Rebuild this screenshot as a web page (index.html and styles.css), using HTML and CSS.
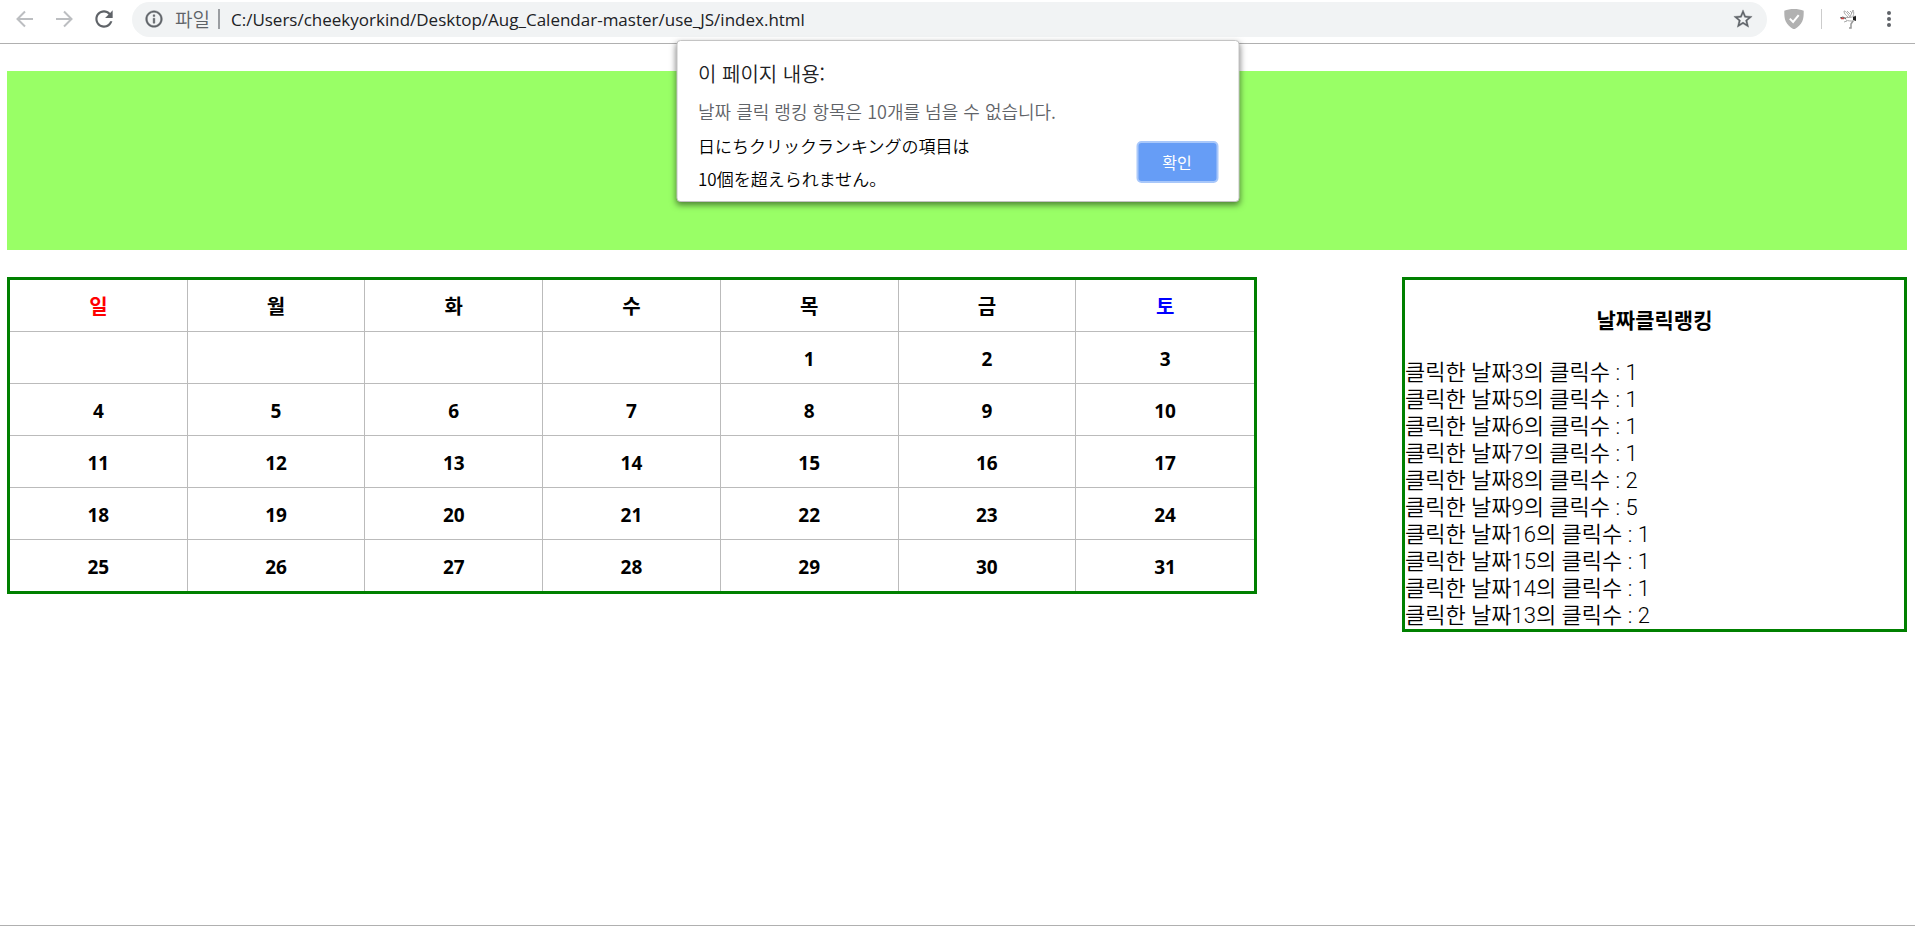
FILE: index.html
```html
<!DOCTYPE html>
<html lang="ko">
<head>
<meta charset="utf-8">
<title>Calendar</title>
<link rel="stylesheet" href="styles.css">
</head>
<body>
<header class="toolbar">
  <button class="tool" type="button" aria-label="뒤로"><svg width="24" height="24" viewBox="0 0 24 24" fill="none" stroke="#bcbec1" stroke-width="2"><path d="M20 12H5M12 4.500 4.500 12l7.500 7.500"/></svg></button>
  <button class="tool" type="button" aria-label="앞으로"><svg width="24" height="24" viewBox="0 0 24 24" fill="none" stroke="#bcbec1" stroke-width="2"><path d="M4 12h15M12 4.500 19.500 12 12 19.500"/></svg></button>
  <button class="tool" type="button" aria-label="새로고침"><svg width="26" height="26" viewBox="0 0 24 24" fill="#5f6368"><path d="M17.650 6.350C16.200 4.900 14.210 4 12 4c-4.420 0-7.990 3.580-7.990 8s3.570 8 7.990 8c3.730 0 6.840-2.550 7.730-6h-2.080c-.82 2.330-3.040 4-5.650 4-3.310 0-6-2.690-6-6s2.690-6 6-6c1.660 0 3.140.69 4.220 1.780L13 11h7V4l-2.350 2.350z"/></svg></button>
  <div class="omnibox">
    <svg width="20" height="20" viewBox="0 0 24 24" fill="#5f6368" stroke="#5f6368" stroke-width=".5"><path d="M11 17h2v-6h-2v6zm1-15C6.480 2 2 6.480 2 12s4.480 10 10 10 10-4.480 10-10S17.520 2 12 2zm0 18c-4.410 0-8-3.590-8-8s3.590-8 8-8 8 3.590 8 8-3.590 8-8 8zM11 9h2V7h-2v2z"/></svg>
    <label class="scheme" for="url">파일</label>
    <input class="url" id="url" type="text" value="C:/Users/cheekyorkind/Desktop/Aug_Calendar-master/use_JS/index.html">
    <button class="tool" type="button" aria-label="북마크"><svg width="22" height="22" viewBox="0 0 24 24" fill="#5f6368" stroke="#5f6368" stroke-width=".4"><path d="M22 9.240l-7.190-.62L12 2 9.190 8.630 2 9.240l5.460 4.730L5.820 21 12 17.270 18.180 21l-1.630-7.030L22 9.240zM12 15.400l-3.760 2.270 1-4.280-3.320-2.880 4.380-.38L12 6.100l1.710 4.040 4.380.38-3.320 2.880 1 4.280L12 15.400z"/></svg></button>
  </div>
  <div class="extensions">
    <button class="tool" type="button" aria-label="보호"><svg width="20" height="20" viewBox="0 0 20 20"><path fill="#b1b1b1" d="M10 0c3.500 0 7 .6 9.700 1.700 0 4 .1 7.300-1.500 10.800C16.500 16 13.500 18.500 10 20.500 6.500 18.500 3.500 16 1.800 12.500.2 9 .3 5.700.3 1.700 3 .6 6.500 0 10 0z"/><path fill="none" stroke="#fff" stroke-width="2" d="m5.800 9.600 3.300 3.300 5.600-6.800"/></svg></button>
    <span class="divider"></span>
    <button class="tool" type="button" aria-label="프로필"><svg width="20" height="20" viewBox="0 0 20 20" fill="none"><path stroke="#aaa" d="M5 2c2 0 4 3 6 6l3-7c1 2 1 4 0 6M5 2c0 3 2 4 4 6M8 2l3 3M11 2l2 2M5 9c3-1 5 0 8-1l4-1M7 11c2 1 4 1 8 1M5 13l3-1"/><path stroke="#999" stroke-width="1.500" d="M14 12l-2 3v4h-2"/><path fill="#222" d="m14 8 3-1v5l-3-1z"/><path stroke="#555" d="m1 9 3-1 3 2"/><path stroke="#c44" stroke-width="1.500" d="M2 9.500h3"/></svg></button>
    <button class="tool" type="button" aria-label="메뉴"><svg width="20" height="20" viewBox="0 0 20 20" fill="#5f6368"><circle cx="10" cy="4" r="2"/><circle cx="10" cy="10" r="2"/><circle cx="10" cy="16" r="2"/></svg></button>
  </div>
</header>

<main class="page">
  <div class="banner"></div>
  <div class="columns">
    <table class="calendar">
      <thead>
        <tr><th class="sunday">일</th><th>월</th><th>화</th><th>수</th><th>목</th><th>금</th><th class="saturday">토</th></tr>
      </thead>
      <tbody>
        <tr><td></td><td></td><td></td><td></td><td>1</td><td>2</td><td>3</td></tr>
        <tr><td>4</td><td>5</td><td>6</td><td>7</td><td>8</td><td>9</td><td>10</td></tr>
        <tr><td>11</td><td>12</td><td>13</td><td>14</td><td>15</td><td>16</td><td>17</td></tr>
        <tr><td>18</td><td>19</td><td>20</td><td>21</td><td>22</td><td>23</td><td>24</td></tr>
        <tr><td>25</td><td>26</td><td>27</td><td>28</td><td>29</td><td>30</td><td>31</td></tr>
      </tbody>
    </table>
    <section class="ranking">
      <h2 class="ranking-title">날짜클릭랭킹</h2>
      <ul class="ranking-list">
        <li>클릭한 날짜3의 클릭수 : 1</li>
        <li>클릭한 날짜5의 클릭수 : 1</li>
        <li>클릭한 날짜6의 클릭수 : 1</li>
        <li>클릭한 날짜7의 클릭수 : 1</li>
        <li>클릭한 날짜8의 클릭수 : 2</li>
        <li>클릭한 날짜9의 클릭수 : 5</li>
        <li>클릭한 날짜16의 클릭수 : 1</li>
        <li>클릭한 날짜15의 클릭수 : 1</li>
        <li>클릭한 날짜14의 클릭수 : 1</li>
        <li>클릭한 날짜13의 클릭수 : 2</li>
      </ul>
    </section>
  </div>
</main>

<dialog class="alert" open>
  <h1 class="alert-title">이 페이지 내용:</h1>
  <p class="alert-message">날짜 클릭 랭킹 항목은 10개를 넘을 수 없습니다.</p>
  <div class="alert-footer">
    <p class="translation" lang="ja">日にちクリックランキングの項目は<br>10個を超えられません。</p>
    <button class="confirm" type="button">확인</button>
  </div>
</dialog>
</body>
</html>
```
FILE: styles.css
```css
* {
  box-sizing: border-box;
}

body {
  margin: 0;
  min-height: 100vh;
  display: flex;
  flex-direction: column;
  background: #fff;
  color: #000;
  font-family: "Noto Sans CJK KR", sans-serif;
  font-weight: 350;
}

/* Browser toolbar */
.toolbar {
  display: flex;
  align-items: center;
  height: 44px;
  padding: 0 14px 5px 13px;
  border-bottom: 1px solid #b0b0b0;
}

.tool {
  display: flex;
  padding: 0;
  border: 0;
  background: none;
}

.toolbar > .tool {
  margin-right: 15px;
}

.omnibox {
  flex: 1;
  display: flex;
  align-items: center;
  height: 35px;
  padding: 0 13px 0 12px;
  border-radius: 18px;
  background: #f1f3f4;
}

.scheme {
  margin-left: 11px;
  padding-right: 8px;
  border-right: 2px solid #9a9da1;
  color: #5f6368;
  font-size: 19px;
  line-height: 20px;
}

.url {
  flex: 1;
  min-width: 0;
  height: 30px;
  margin-left: 11px;
  padding: 0;
  border: 0;
  background: none;
  color: #202124;
  font-family: "Open Sans", sans-serif;
  font-size: 17px;
}

.extensions {
  display: flex;
  align-items: center;
  gap: 17px;
  margin-left: 17px;
}

.extensions .tool:last-child {
  margin-left: 3px;
  margin-right: 2px;
}

.divider {
  width: 1px;
  height: 20px;
  background: #ccc;
}

/* Calendar page */
.page {
  flex: 1;
  padding: 27px 8px 0 7px;
  margin-bottom: 1px;
  border-bottom: 1px solid #b0b0b0;
}

.banner {
  height: 179px;
  margin-bottom: 27px;
  background: #9f6;
}

.columns {
  display: grid;
  grid-template-columns: 250fr 101fr;
  column-gap: 145px;
  align-items: start;
}

.calendar {
  width: 100%;
  border: 3px solid green;
  border-spacing: 0;
  table-layout: fixed;
  font-size: 19px;
  font-weight: bold;
}

.calendar th,
.calendar td {
  height: 52px;
  padding: 2px 0 0;
  border-right: 1px solid #bbb;
  border-bottom: 1px solid #bbb;
  line-height: 26px;
  text-align: center;
}

.calendar th {
  padding: 0;
  font-size: 20px;
}

.calendar td {
  font-family: "Open Sans", sans-serif;
}

.calendar th:last-child,
.calendar td:last-child {
  border-right: 0;
}

.calendar tr:last-child td {
  height: 51px;
  border-bottom: 0;
}

.calendar thead tr th {
  height: 52px;
  border-bottom: 1px solid #bbb;
}

.calendar .sunday {
  color: red;
}

.calendar .saturday {
  color: blue;
}

.ranking {
  border: 3px solid green;
  line-height: 27px;
}

.ranking-title {
  margin: 26px 0;
  font-size: 21px;
  line-height: 27px;
  text-align: center;
}

.ranking-list {
  margin: 0;
  padding: 0;
  list-style: none;
  font-family: Roboto, "Noto Sans CJK KR", sans-serif;
  font-size: 22px;
}

/* Alert dialog */
.alert {
  position: absolute;
  top: 40px;
  left: 50%;
  width: 563px;
  margin: 0;
  padding: 20px 20px 6px 21px;
  transform: translateX(-50%);
  border: 1px solid #c4c4c4;
  border-radius: 4px;
  background: #fff;
  box-shadow: 0 3px 6px rgba(0, 0, 0, 0.5);
}

.alert-title {
  margin: 0;
  color: #202124;
  font-size: 20px;
  font-weight: 350;
  line-height: 26px;
}

.alert-message {
  margin: 12px 0 6px;
  color: #5f6368;
  font-size: 18px;
  line-height: 24px;
}

.alert-footer {
  display: flex;
  justify-content: space-between;
  align-items: center;
}

.translation {
  margin: 0;
  color: #000;
  font-family: "Noto Sans CJK JP", sans-serif;
  font-size: 17px;
  line-height: 33px;
}

.confirm {
  width: 82px;
  height: 42px;
  border: 2px solid #a9c8fa;
  border-radius: 5px;
  background: #669df6;
  color: #fff;
  font-family: inherit;
  font-size: 16px;
}
```
